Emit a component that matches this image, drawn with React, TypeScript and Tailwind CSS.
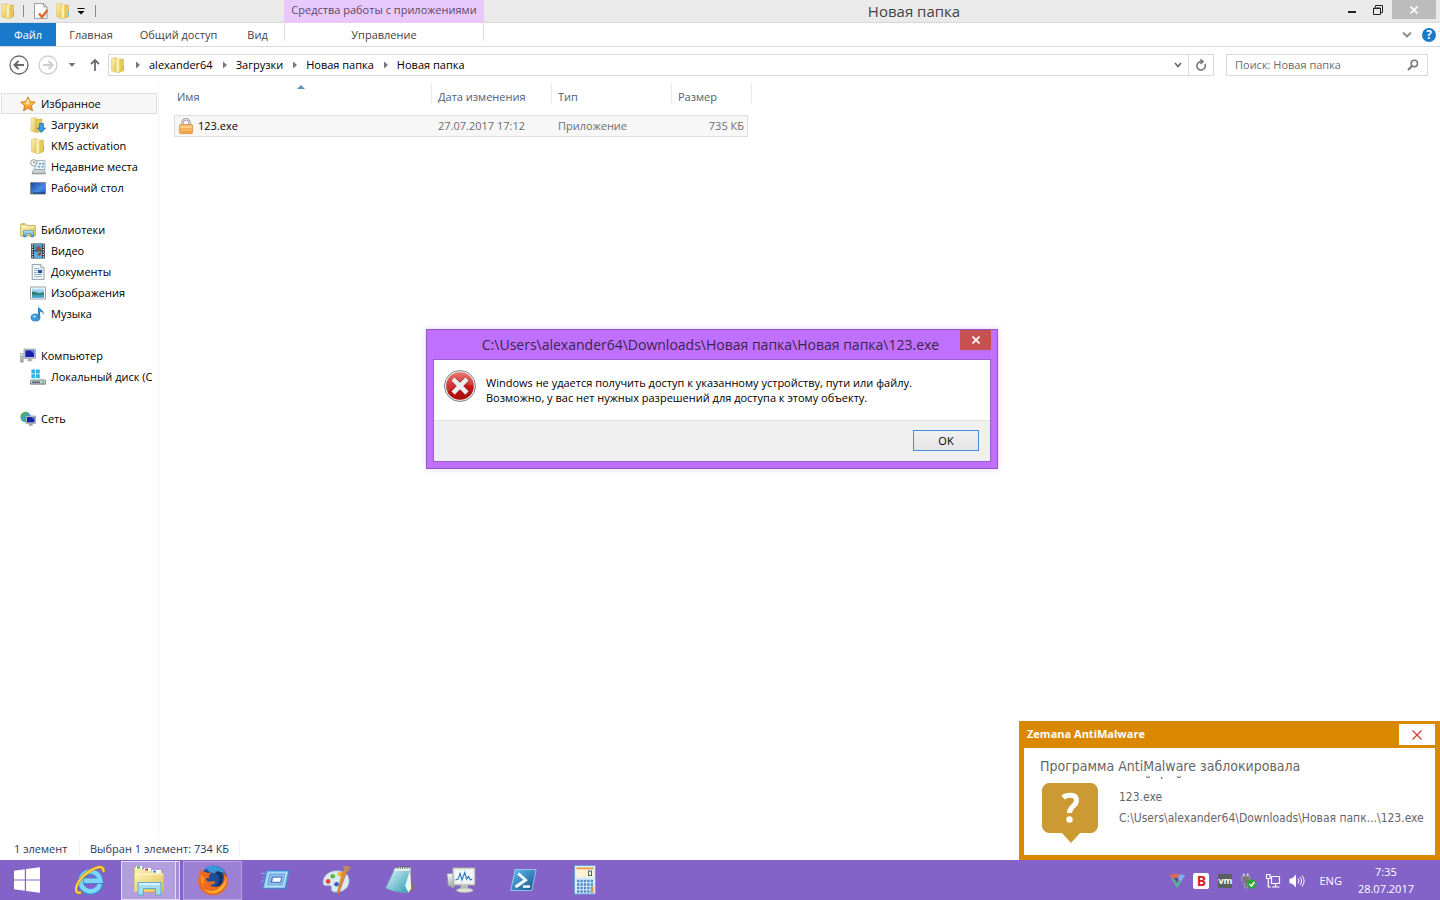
import { useState } from "react";
import type { ReactNode } from "react";

type IconProps = { className?: string };

type TreeItem = {
    label: string;
    icon: ReactNode;
};

type TreeGroup = TreeItem & {
    items: TreeItem[];
    selected?: boolean;
};

/* Gradients shared by all the icons below */
function Gradients() {
    return (
        <svg width="0" height="0" className="absolute" aria-hidden="true">
            <defs>
                <linearGradient id="folder" x1="0" y1="0" x2="1" y2="1">
                    <stop offset="0" stopColor="#fdf3b8" />
                    <stop offset="1" stopColor="#e0be4c" />
                </linearGradient>
                <linearGradient id="screen" x1="0" y1="0" x2="1" y2="1">
                    <stop offset="0" stopColor="#1a3f9e" />
                    <stop offset="0.6" stopColor="#4b8be4" />
                    <stop offset="1" stopColor="#1d4fb0" />
                </linearGradient>
                <linearGradient id="sky" x1="0" y1="0" x2="0" y2="1">
                    <stop offset="0" stopColor="#bfe6fb" />
                    <stop offset="1" stopColor="#2f8fd0" />
                </linearGradient>
                <linearGradient id="gold" x1="0" y1="0" x2="0" y2="1">
                    <stop offset="0" stopColor="#ffe27a" />
                    <stop offset="1" stopColor="#ef8a17" />
                </linearGradient>
                <linearGradient id="red" x1="0" y1="0" x2="0" y2="1">
                    <stop offset="0" stopColor="#e8605a" />
                    <stop offset="0.5" stopColor="#c81414" />
                    <stop offset="1" stopColor="#a80c0c" />
                </linearGradient>
                <linearGradient id="steel" x1="0" y1="0" x2="0" y2="1">
                    <stop offset="0" stopColor="#f5f7f8" />
                    <stop offset="1" stopColor="#9aa4ab" />
                </linearGradient>
                <linearGradient id="teal" x1="0" y1="0" x2="1" y2="1">
                    <stop offset="0" stopColor="#e4f7fb" />
                    <stop offset="1" stopColor="#2a9cb4" />
                </linearGradient>
                <linearGradient id="shell" x1="0" y1="0" x2="1" y2="1">
                    <stop offset="0" stopColor="#5fc0ee" />
                    <stop offset="1" stopColor="#114f91" />
                </linearGradient>
            </defs>
        </svg>
    );
}

function FolderIcon({ className }: IconProps) {
    return (
        <svg viewBox="0 0 16 16" className={className}>
            <path d="M1.500 1.200 7 .6v14.800l-5.500-1.600z" fill="url(#folder)" stroke="#d9bb55" strokeWidth=".5" />
            <path d="M7 2.200 13.400 2v11.800L8.500 15.400 7 15.200z" fill="#e6c95c" stroke="#c9a63f" strokeWidth=".5" />
            <path d="M6.400 2.600 9.200 1v13.400l-2.800 1z" fill="#fbf0b0" />
            <path d="M13 8.400h1v4.200l-1 .4z" fill="#6fb6d8" />
        </svg>
    );
}

function DownloadsIcon({ className }: IconProps) {
    return (
        <svg viewBox="0 0 16 16" className={className}>
            <path d="M1 1.200 6 .6v14.800l-5-1.600z" fill="url(#folder)" stroke="#d9bb55" strokeWidth=".5" />
            <path d="M6 2.200 12 2v11.800L7.500 15.400 6 15.200z" fill="#e6c95c" stroke="#c9a63f" strokeWidth=".5" />
            <path d="M9.400 6.500h4V11h2.200l-4.200 4.600L7.200 11h2.200z" fill="#3f9be0" stroke="#1b62a8" strokeWidth=".7" />
        </svg>
    );
}

function StarIcon({ className }: IconProps) {
    return (
        <svg viewBox="0 0 16 16" className={className}>
            <path
                d="M8 .8l2.100 4.800 5.200.5-3.900 3.500 1.100 5.200L8 12.100l-4.500 2.700 1.100-5.200L.7 6.100l5.200-.5z"
                fill="url(#gold)"
                stroke="#d0761c"
                strokeWidth=".9"
                strokeLinejoin="round"
            />
            <path d="M8 2.600 9.400 6 8 9 4.600 7l2-.4z" fill="#fff3b5" opacity=".8" />
        </svg>
    );
}

function RecentIcon({ className }: IconProps) {
    return (
        <svg viewBox="0 0 16 16" className={className}>
            <path d="M6 1.500h9v9H4.500z" fill="#e6f1f8" stroke="#93a3ad" strokeWidth=".8" />
            <path d="M9 4h2v1.500H9zM12 4h2v1.500h-2zM8 7h2v1.500H8zM11.500 7h2v1.500h-2z" fill="#5aa0cc" />
            <path d="M3 11h11.500l1 4H2z" fill="url(#steel)" stroke="#7f8b92" strokeWidth=".6" />
            <circle cx="3.800" cy="3.800" r="3.200" fill="#f4f7f9" stroke="#8a979f" strokeWidth=".9" />
            <path d="M3.800 1.800v2.200h1.600" fill="none" stroke="#5b6870" strokeWidth=".7" />
        </svg>
    );
}

function DesktopIcon({ className }: IconProps) {
    return (
        <svg viewBox="0 0 16 16" className={className}>
            <path d="M.5 2.500h15v11.500H.5z" fill="url(#screen)" stroke="#7a8798" strokeWidth=".9" />
            <path d="M1 12.500h14v1.200H1z" fill="#173a77" />
            <path d="M1.400 12.600h1.500v.9H1.400z" fill="#7fd36a" />
        </svg>
    );
}

function LibraryIcon({ className }: IconProps) {
    return (
        <svg viewBox="0 0 16 16" className={className}>
            <path d="M.7 2h5l1 1.400h8.600V14H.7z" fill="url(#folder)" stroke="#c3a046" strokeWidth=".8" />
            <path d="M2 1.500h2.600v1H2z" fill="#58b44d" />
            <path d="M1.500 5h13" stroke="#fff8d0" strokeWidth=".9" />
            <path d="M3.500 15V8.500h10V15h-2.600v-3.200H6.100V15z" fill="url(#sky)" stroke="#3d8cba" strokeWidth=".6" />
        </svg>
    );
}

function VideoIcon({ className }: IconProps) {
    return (
        <svg viewBox="0 0 16 16" className={className}>
            <path d="M1.200.5h13.600v15H1.200z" fill="#2b343b" />
            <path d="M4 1h8v6.500H4z" fill="#4c9ccc" />
            <path d="M4 8.400h8V15H4z" fill="#58aee0" />
            <path d="M5.500 3.500l1.500 1 2-1.500 2 2v2.500H6zM7 11.500l1.500-1.500L11 9v2.500L9 13z" fill="#865348" />
            <path d="M2.600 1.200v14M13.400 1.200v14" stroke="#eef3f5" strokeWidth="1.200" strokeDasharray="1.200 1.200" />
        </svg>
    );
}

function DocumentIcon({ className }: IconProps) {
    return (
        <svg viewBox="0 0 16 16" className={className}>
            <path d="M2.200.6h8.600l3.200 3.200v11.600H2.200z" fill="#fbfdfe" stroke="#84929c" strokeWidth=".9" />
            <path d="M10.800.6v3.200H14" fill="#d9e4ea" stroke="#84929c" strokeWidth=".7" />
            <path d="M4 4.500h5M4 6.500h3M4 8.500h3M4 10.500h8M4 12.700h8" stroke="#7ea4c4" strokeWidth=".9" />
            <path d="M7.800 5.800h4.400v3.400H7.800z" fill="#23599c" />
        </svg>
    );
}

function PictureIcon({ className }: IconProps) {
    return (
        <svg viewBox="0 0 16 16" className={className}>
            <path d="M.5 2h15v12H.5z" fill="#fdfdfd" stroke="#8d979e" strokeWidth=".9" />
            <path d="M2 3.500h12v9H2z" fill="url(#sky)" />
            <path d="M2 7c3-.6 4 .8 6.500 1.200S12 6.800 14 7.600V10H2z" fill="#2d7a58" />
            <path d="M2 9.600h12v2.900H2z" fill="#3f9ec4" />
        </svg>
    );
}

function MusicIcon({ className }: IconProps) {
    return (
        <svg viewBox="0 0 16 16" className={className}>
            <ellipse cx="5.500" cy="11.500" rx="4.500" ry="3.600" fill="#3d98dc" stroke="#20629c" strokeWidth=".6" />
            <path d="M8 12V.2c1 2.800 6.600 3.400 5.800 9.200-.4-2.400-1.900-3.400-3.700-3.900V12z" fill="#2b83c8" />
            <ellipse cx="4.400" cy="10.500" rx="1.800" ry="1.100" fill="#aedcf8" />
        </svg>
    );
}

function ComputerIcon({ className }: IconProps) {
    return (
        <svg viewBox="0 0 16 16" className={className}>
            <path d="M4 1h11.500v9.400H4z" fill="#cfd4d8" stroke="#868f96" strokeWidth=".7" />
            <path d="M5.300 2.300h8.900v6.800H5.300z" fill="#1822a8" />
            <path d="M10 2.300h4.200v3.400z" fill="#5b74ea" />
            <path d="M8.400 10.400h2.800l1.400 2.800H7z" fill="#aab1b6" />
            <path d="M.6 5.500h2.600v8.600H.6z" fill="url(#steel)" stroke="#7d878d" strokeWidth=".6" />
            <path d="M1.200 8h1.400v1.200H1.200z" fill="#66bb55" />
        </svg>
    );
}

function DiskIcon({ className }: IconProps) {
    return (
        <svg viewBox="0 0 16 16" className={className}>
            <path d="M1.400.6h3.800v3.800H1.400zM6 .6h3.800v3.800H6zM1.400 5.200h3.800V9H1.400zM6 5.200h3.800V9H6z" fill="#2bb4ea" />
            <path d="M2 9.500h12l1.500 2H.5z" fill="#d5dbdf" />
            <path d="M.5 11.300h15v3.900H.5z" fill="url(#steel)" stroke="#5f6a70" strokeWidth=".7" />
            <path d="M2 12.400h8v1.600H2z" fill="#5a6a72" />
            <path d="M12 12.400h2.200V14H12z" fill="#68d052" />
        </svg>
    );
}

function NetworkIcon({ className }: IconProps) {
    return (
        <svg viewBox="0 0 16 16" className={className}>
            <circle cx="5.600" cy="6" r="5.200" fill="#3f9fdc" />
            <path d="M2 3c2-2 4-2.400 5.400-1.600C7 4 4 4 3.600 6.600 2 7 .8 6 .6 5.400zM4 8l3 .6-.6 2.400C4.600 11 4 9.500 4 8z" fill="#4fb450" />
            <path d="M6 5h9.500v7.400H6z" fill="#c9d0d6" stroke="#7d868c" strokeWidth=".6" />
            <path d="M7 6h7.500v5.400H7z" fill="#1822a8" />
            <path d="M11 6h3.500v3z" fill="#5b74ea" />
            <path d="M9.600 12.400h2.400l1.200 2.400H8.400z" fill="#9aa2a8" />
        </svg>
    );
}

function LockIcon({ className }: IconProps) {
    return (
        <svg viewBox="0 0 16 16" className={className}>
            <path d="M4.500 8V4.500a3.500 3.300 0 0 1 7 0V8" fill="none" stroke="#9b9b9b" strokeWidth="2.400" />
            <path d="M4.500 8V4.500a3.500 3.300 0 0 1 7 0V8" fill="none" stroke="#e2e2e2" strokeWidth="1" />
            <rect x="1.500" y="6.500" width="13" height="9" rx="1" fill="#f3a74a" stroke="#cf7e22" strokeWidth=".6" />
            <path d="M2 7.200h12v3H2z" fill="#fbc77f" />
            <path d="M2.500 9.500h11M2.500 12h11" stroke="#ffd9a0" strokeWidth=".7" />
        </svg>
    );
}

function PropertiesIcon({ className }: IconProps) {
    return (
        <svg viewBox="0 0 16 16" className={className}>
            <path d="M1.500.6h9L14 4v11.400H1.500z" fill="#fff" stroke="#8f8f8f" strokeWidth=".9" />
            <path d="M10.500.6V4H14" fill="none" stroke="#8f8f8f" strokeWidth=".8" />
            <path d="M6 10.500 9 14l5.500-7" fill="none" stroke="#e0683c" strokeWidth="2.400" />
        </svg>
    );
}

function ErrorIcon({ className }: IconProps) {
    return (
        <svg viewBox="0 0 32 32" className={className}>
            <circle cx="16" cy="16" r="15.500" fill="#e9e9e9" stroke="#7b7b7b" strokeWidth=".9" />
            <circle cx="16" cy="16" r="13.800" fill="url(#red)" />
            <path d="M16 2.200A13.800 13.800 0 0 1 29.800 16C22 13 10 15 3.600 22A13.800 13.800 0 0 1 16 2.200z" fill="#fff" opacity=".14" />
            <path d="M9 9l14 14M23 9 9 23" stroke="#8b0d0d" strokeWidth="5.800" />
            <path d="M9 9l14 14M23 9 9 23" stroke="#ececec" strokeWidth="4.600" />
        </svg>
    );
}

function WindowsLogo({ className }: IconProps) {
    return (
        <svg viewBox="0 0 26 26" className={className}>
            <path d="M0 3.800 10.800 2.300v10.200H0zM12 2.100 26 .2v12.300H12zM0 13.600h10.800v10.200L0 22.300zM12 13.600h14v12.200l-14-1.900z" fill="#fff" />
        </svg>
    );
}

function ExplorerLogo({ className }: IconProps) {
    return (
        <svg viewBox="0 0 32 32" className={className}>
            <path d="M1 3h7l1 2h9l1 2h10l1 21H2z" fill="url(#folder)" stroke="#b99b4a" strokeWidth=".7" />
            <path d="M3 2h6v3H3z" fill="#fff" />
            <path d="M4 2.400h3v2H4z" fill="#2ea84a" />
            <path d="M11 4h7v3h-7z" fill="#fff" />
            <path d="M12 4.600h3v2h-3z" fill="#c2472f" />
            <path d="M19 6h9v3h-9z" fill="#fff" />
            <path d="M20 6.600h3v2h-3z" fill="#3b8ed0" />
            <path d="M1.500 9.500h29V28h-29z" fill="url(#folder)" />
            <path d="M2 10h28" stroke="#fff8d6" />
            <path d="M5 31V18.500h23V31h-5.500v-6.500h-12V31z" fill="#a6dcf2" stroke="#4fa6cc" strokeWidth=".9" />
            <path d="M6 20h21" stroke="#effaff" strokeWidth="1.500" />
        </svg>
    );
}

function InternetExplorerLogo({ className }: IconProps) {
    return (
        <svg viewBox="0 0 32 32" className={className}>
            <path d="M26.800 20.500A10.500 10.500 0 1 1 27 16.800H9.500" fill="none" stroke="#2e8fd4" strokeWidth="6.400" />
            <path d="M26.600 20.500A10.500 10.500 0 1 1 27 16.800H9.500" fill="none" stroke="#7fd6fa" strokeWidth="4.800" />
            <path
                d="M5.500 29.500C-2 31 .5 19.500 10 11S30.500-1.500 30.500 6.500"
                fill="none"
                stroke="#b98212"
                strokeWidth="3.400"
                strokeLinecap="round"
            />
            <path
                d="M5.500 29.500C-2 31 .5 19.500 10 11S30.500-1.500 30.500 6.500"
                fill="none"
                stroke="#fbd548"
                strokeWidth="2.200"
                strokeLinecap="round"
            />
        </svg>
    );
}

function FirefoxLogo({ className }: IconProps) {
    return (
        <svg viewBox="0 0 32 32" className={className}>
            <circle cx="17" cy="14.500" r="12.800" fill="#1d4f96" />
            <path d="M9 3.500C15-.5 25 2 28 9c-5-2-8 1-12 0S9 5 9 3.500z" fill="#3d96d8" />
            <path d="M18 8c4-2 8 1 8 6s-3 9-8 9c5-4 6-10 0-15z" fill="#143468" />
            <path
                d="M3.500 5C3 7 3 8.500 3.300 9.500 1 13-.5 20 4 25.500c6 7.500 17 7.500 22.500 1.500 4.500-4.500 6-11 3.500-17 .2 2-.3 3-.8 3.600-.4-2.500-1.500-4.500-3-5.600 1.300 5 1 9.500-2 12.500-4 4-10 2.500-11.500 0 2.500.8 4-.5 5.800-1.700-.8-2-3-1.700-5-1.200-2.500.6-4.500-.8-4.700-3 .8-.7 2-.7 3.200-.2.2-1.200 0-1.900-.3-2.400.8-1.400 2-2.300 3.200-3-1.400-.2-3-.3-4.300 0C9.500 8.200 6.500 7.600 5.200 7.800 4.400 7.300 3.800 6.200 3.500 5z"
                fill="#ee6a1c"
            />
            <path d="M29.500 12c1 6-2 13-8 16-6 2.500-12 1-15-3 5 3 11 3 16-1s6-8 7-12z" fill="#f9b62c" />
            <path d="M4 10c-1 4 0 9 3 12-1-4 0-7 1-8.500-2-.5-3.500-2-4-3.500z" fill="#f8922a" />
        </svg>
    );
}

function RunIcon({ className }: IconProps) {
    return (
        <svg viewBox="0 0 32 32" className={className}>
            <path d="M1 9h8M3 13h8M1 17h6M5 21h4" stroke="#8fc0f0" strokeWidth="1.200" opacity=".7" />
            <path d="M7 6h24l-4 19H3z" fill="#8cc6f2" stroke="#4286cf" strokeWidth="1.200" />
            <path d="M9.500 8.500h18.500L25 22.500H6.500z" fill="#6ba4dd" stroke="#c9e8fb" strokeWidth="1.200" />
            <path d="M12 11.500h13l-2 8.500H10z" fill="#4f7fd0" stroke="#b4dcf8" />
            <path d="M14 13.500h8.500l-1 4.300H13z" fill="#fff" />
        </svg>
    );
}

function PaintIcon({ className }: IconProps) {
    return (
        <svg viewBox="0 0 32 32" className={className}>
            <path
                d="M16 6C7 6 1 12 1 18.500c0 4 3 4 5.500 3.500s4 .5 3.500 3c-.5 3 2 4 5 4 8 0 14-5 14-12S24 6 16 6z"
                fill="#dceaf5"
                stroke="#8fa9c4"
                strokeWidth=".8"
            />
            <circle cx="6.500" cy="17.500" r="2.500" fill="#e2472f" />
            <circle cx="11.500" cy="12" r="2.500" fill="#5cb63f" />
            <circle cx="19" cy="9.800" r="2.500" fill="#f2bc2b" />
            <circle cx="15.500" cy="20.500" r="2.500" fill="#3c62bd" />
            <path d="M26.500 7 17.500 31.500l-1.500-1L22 7z" fill="#e88c30" stroke="#a85d18" strokeWidth=".5" />
            <path d="M22 7.500 24 4l-2-3.500 9 1.500-3 4.500-2 2z" fill="#c48a5c" />
        </svg>
    );
}

function NotepadIcon({ className }: IconProps) {
    return (
        <svg viewBox="0 0 32 32" className={className}>
            <path d="M28 4 31.500 26l-5.500 4z" fill="#8d7452" />
            <path d="M12 3h16l-3.500 26.500C16 29 8 28 2 24.500z" fill="url(#teal)" stroke="#7fa9b2" strokeWidth=".6" />
            <path d="M28 5 22.500 22l3.500 7.500 3-4.500z" fill="#eaf6f6" />
            <path d="M12 2.500h16.500L28 6H10.500z" fill="#f4f5f5" />
            <path d="M12 2.500h17" stroke="#5d6568" strokeWidth="3" strokeDasharray="1.200 1.200" />
        </svg>
    );
}

function MonitorIcon({ className }: IconProps) {
    return (
        <svg viewBox="0 0 32 32" className={className}>
            <path d="M1 9h8v16l-7-3z" fill="url(#steel)" stroke="#7e868b" strokeWidth=".7" />
            <path d="M7 3h24v18.500H8z" fill="#e9e9e4" stroke="#8b8b86" strokeWidth=".8" />
            <path d="M9.500 5.500h19V19H10z" fill="#f2f9fc" />
            <path d="M10 16l3-1 2-6 2 7 3-8 2 7 2-3 2 4 2-1" fill="none" stroke="#2b77bd" strokeWidth="1.200" />
            <path d="M16 21.500h7l1 4h-9z" fill="#c6c8c6" />
            <ellipse cx="20" cy="27" rx="9" ry="2.600" fill="#dedfdc" stroke="#8b8b86" strokeWidth=".6" />
        </svg>
    );
}

function PowerShellIcon({ className }: IconProps) {
    return (
        <svg viewBox="0 0 32 32" className={className}>
            <path d="M7 4h24l-5 24H2z" fill="url(#shell)" stroke="#9fd0ea" strokeWidth="1" />
            <path d="M10.500 8.500 19 16 7.500 24" fill="none" stroke="#fff" strokeWidth="3.200" />
            <path d="M16 23.500h8" stroke="#fff" strokeWidth="2.800" />
        </svg>
    );
}

function CalculatorIcon({ className }: IconProps) {
    return (
        <svg viewBox="0 0 32 32" className={className}>
            <rect x="5.500" y="1.500" width="21" height="28.500" rx="1" fill="#dceefb" stroke="#6f9fd4" />
            <path d="M7.500 3.500h17v2h-17z" fill="#ef9b3a" />
            <path d="M7.500 5.500h17V13h-17z" fill="#fff3d6" />
            <rect x="19.500" y="7" width="3" height="4.500" fill="none" stroke="#4a5d78" />
            <path
                d="M8 17h16M8 20.500h16M8 24h16M8 27.500h16"
                stroke="#4d8cc9"
                strokeWidth="2.400"
                strokeDasharray="2.400 1"
            />
            <path d="M22 22.500h2.500v6H22z" fill="#e9962f" />
        </svg>
    );
}

function TrayIcons() {
    return (
        <>
            <svg viewBox="0 0 16 16" className="size-4">
                <path d="M0 2 5 .8l6 .4L8 5H3.500z" fill="#e06a58" />
                <path d="M10.500 1.200 16 2l-4 7-3-3.500z" fill="#7fb2ea" />
                <path d="M1.500 4.500 4.500 5l3.300 5.500 3-4 1.200 2-4 6.500z" fill="#52b98a" />
                <path d="M4.800 5h4.400l-1.400 4z" fill="#5a4590" />
            </svg>
            <span className="flex size-4 items-center justify-center rounded-xs bg-white text-sm leading-4 font-bold text-[#d61f26]">
                B
            </span>
            <span className="mx-px flex h-[14px] w-[14px] items-center justify-center bg-[#5e5e5e] text-[9px] leading-3 font-bold text-white">
                vm
            </span>
            <svg viewBox="0 0 16 16" className="size-4">
                <path d="M2 .5h1.500V3H2zM6 .5h1.500V3H6z" fill="#ddd" />
                <path d="M.8 3h8v5l-2.500 2v5H3.500v-5L.8 8z" fill="#777" stroke="#b5b5b5" strokeWidth=".6" />
                <circle cx="11" cy="11" r="4.800" fill="#2fa43a" />
                <path d="M8.600 11l1.900 2 3-4" fill="none" stroke="#fff" strokeWidth="1.500" />
            </svg>
            <svg viewBox="0 0 16 16" className="size-4" fill="none" stroke="#fff" strokeWidth="1.200">
                <path d="M6.500 3.500h8v7h-8zM10.500 10.500v3M7 14h7.500" />
                <path d="M1.500 1.500h3.500v4H1.500zM3.300 5.500V14h2.500" />
            </svg>
            <svg viewBox="0 0 16 16" className="size-4">
                <path d="M.5 5.500H3l4-4v13l-4-4H.5z" fill="#fff" />
                <path d="M9 5.500a4 4 0 0 1 0 5M11 4a6 6 0 0 1 0 8M13 2.500a9 9 0 0 1 0 11" fill="none" stroke="#fff" strokeWidth="1" />
            </svg>
        </>
    );
}

const tree: TreeGroup[] = [
    {
        label: "Избранное",
        icon: <StarIcon className="size-4 shrink-0" />,
        selected: true,
        items: [
            { label: "Загрузки", icon: <DownloadsIcon className="size-4 shrink-0" /> },
            { label: "KMS activation", icon: <FolderIcon className="size-4 shrink-0" /> },
            { label: "Недавние места", icon: <RecentIcon className="size-4 shrink-0" /> },
            { label: "Рабочий стол", icon: <DesktopIcon className="size-4 shrink-0" /> },
        ],
    },
    {
        label: "Библиотеки",
        icon: <LibraryIcon className="size-4 shrink-0" />,
        items: [
            { label: "Видео", icon: <VideoIcon className="size-4 shrink-0" /> },
            { label: "Документы", icon: <DocumentIcon className="size-4 shrink-0" /> },
            { label: "Изображения", icon: <PictureIcon className="size-4 shrink-0" /> },
            { label: "Музыка", icon: <MusicIcon className="size-4 shrink-0" /> },
        ],
    },
    {
        label: "Компьютер",
        icon: <ComputerIcon className="size-4 shrink-0" />,
        items: [{ label: "Локальный диск (C", icon: <DiskIcon className="size-4 shrink-0" /> }],
    },
    { label: "Сеть", icon: <NetworkIcon className="size-4 shrink-0" />, items: [] },
];

const crumbs = ["alexander64", "Загрузки", "Новая папка", "Новая папка"];

const pinned = [
    { label: "Выполнить", icon: <RunIcon className="size-[30px]" /> },
    { label: "Paint", icon: <PaintIcon className="size-[30px]" /> },
    { label: "Блокнот", icon: <NotepadIcon className="size-[30px]" /> },
    { label: "Монитор ресурсов", icon: <MonitorIcon className="size-[30px]" /> },
    { label: "PowerShell", icon: <PowerShellIcon className="size-7" /> },
    { label: "Калькулятор", icon: <CalculatorIcon className="size-8" /> },
];

function TitleBar() {
    return (
        <header className="flex h-[23px] shrink-0 bg-[#eaeaea]">
            <div className="flex w-[284px] items-center border-b border-[#d8d8d8]">
                <FolderIcon className="size-4" />
                <span className="ml-[7px] h-3 w-px bg-[#8a8a8a]" />
                <button aria-label="Свойства" className="ml-[9px]">
                    <PropertiesIcon className="size-4" />
                </button>
                <button aria-label="Новая папка" className="ml-[6px]">
                    <FolderIcon className="size-4" />
                </button>
                <button aria-label="Настройка панели" className="ml-[6px]">
                    <svg viewBox="0 0 8 8" className="size-2">
                        <path d="M.5 1.500h7" stroke="#000" />
                        <path d="M.5 4h7L4 7.500z" fill="#000" />
                    </svg>
                </button>
                <span className="ml-[10px] h-3 w-px bg-[#8a8a8a]" />
            </div>
            <div className="flex w-[200px] justify-center bg-[#e9c9fb] text-[11px] leading-5 whitespace-nowrap text-[#5b4a68]">
                Средства работы с приложениями
            </div>
            <h1 className="flex-1 border-b border-[#d8d8d8] text-center text-[15px] leading-[22px] text-[#444]">Новая папка</h1>
            <div className="flex items-start border-b border-[#d8d8d8]">
                <button aria-label="Свернуть" className="flex h-5 w-4 items-center justify-center">
                    <svg viewBox="0 0 8 8" className="size-2">
                        <path d="M0 6h8" stroke="#222" strokeWidth="2" />
                    </svg>
                </button>
                <button aria-label="Восстановить" className="flex h-5 w-8 items-center justify-center pl-1">
                    <svg viewBox="0 0 10 10" className="size-[10px]" fill="none" stroke="#222">
                        <path d="M.5 3h7v6.500h-7zM0 3.500h8M2.500 2.500V.5h7v7H8" />
                    </svg>
                </button>
                <button aria-label="Закрыть" className="flex h-[19px] w-11 items-center justify-center bg-[#bcbcbc]">
                    <svg viewBox="0 0 8 8" className="size-2" stroke="#fff" strokeWidth="1.600">
                        <path d="M.5.5l7 7M7.500.5l-7 7" />
                    </svg>
                </button>
                <span className="w-1" />
            </div>
        </header>
    );
}

function Ribbon() {
    return (
        <nav className="flex h-6 shrink-0 border-b border-[#dadbdc] text-[11px] leading-6 text-[#444]">
            <button className="w-14 bg-[#1979ca] text-white">Файл</button>
            <button className="w-[70px]">Главная</button>
            <button className="w-[105px]">Общий доступ</button>
            <button className="w-[53px]">Вид</button>
            <button className="h-[18px] w-[200px] border-x border-[#e4e0e6]">Управление</button>
            <div className="ml-auto flex items-center gap-[10px] pr-1">
                <button aria-label="Развернуть ленту">
                    <svg viewBox="0 0 10 8" className="h-2 w-[10px]" fill="none" stroke="#8a8a8a" strokeWidth="1.800">
                        <path d="M1 1.500l4 4 4-4" />
                    </svg>
                </button>
                <button
                    aria-label="Справка"
                    className="flex size-[14px] items-center justify-center rounded-full bg-[#1979ca] text-xs leading-[14px] font-bold text-white"
                >
                    ?
                </button>
            </div>
        </nav>
    );
}

function AddressRow() {
    return (
        <div className="flex h-9 shrink-0 items-center pr-3 text-[11px] text-black">
            <div className="flex w-[108px] items-center pl-[9px]">
                <button aria-label="Назад">
                    <svg viewBox="0 0 20 20" className="size-5" fill="none" stroke="#6b6b6b">
                        <circle cx="10" cy="10" r="9" strokeWidth="1.300" />
                        <path d="M15 10H6M9.500 6 5.500 10l4 4" strokeWidth="2" />
                    </svg>
                </button>
                <button aria-label="Вперед" className="ml-[9px]">
                    <svg viewBox="0 0 20 20" className="size-5" fill="none" stroke="#cdcdcd">
                        <circle cx="10" cy="10" r="9" strokeWidth="1.300" />
                        <path d="M5 10h9M10.500 6l4 4-4 4" strokeWidth="2" />
                    </svg>
                </button>
                <button aria-label="Последние расположения" className="ml-[10px]">
                    <svg viewBox="0 0 8 8" className="size-2">
                        <path d="M.5 2h7L4 6z" fill="#777" />
                    </svg>
                </button>
                <button aria-label="Вверх" className="ml-[13px]">
                    <svg viewBox="0 0 12 14" className="h-[14px] w-3" fill="none" stroke="#6b6b6b" strokeWidth="1.800">
                        <path d="M6 13V2M2 6l4-4 4 4" />
                    </svg>
                </button>
            </div>
            <div className="flex h-[22px] min-w-0 flex-1 items-center border border-[#d9d9d9]">
                <FolderIcon className="ml-px size-4" />
                {crumbs.map((crumb, i) => (
                    <span key={i} className="flex items-center">
                        <svg viewBox="0 0 8 8" className="mr-[7px] ml-2 size-2">
                            <path d="M2 .5 6 4 2 7.500z" fill="#777" />
                        </svg>
                        <button className="leading-5 whitespace-nowrap">{crumb}</button>
                    </span>
                ))}
                <button aria-label="Предыдущие расположения" className="ml-auto flex w-5 justify-center">
                    <svg viewBox="0 0 8 8" className="size-2" fill="none" stroke="#666" strokeWidth="1.600">
                        <path d="M1 2l3 3.500L7 2" />
                    </svg>
                </button>
                <button aria-label="Обновить" className="flex h-full w-[25px] items-center justify-center border-l border-[#d9d9d9]">
                    <svg viewBox="0 0 12 12" className="size-3" fill="none" stroke="#777" strokeWidth="1.600">
                        <path d="M9.800 4.800A4.200 4.200 0 1 1 6 2.600h1.500" />
                        <path d="M5.500.3 8 2.600 5.500 4.900" />
                    </svg>
                </button>
            </div>
            <label className="ml-3 flex h-[22px] w-[202px] items-center border border-[#d9d9d9] px-2">
                <input
                    type="search"
                    aria-label="Поиск"
                    placeholder="Поиск: Новая папка"
                    className="min-w-0 flex-1 leading-5 outline-none placeholder:text-[#6d6d6d]"
                />
                <svg viewBox="0 0 12 12" className="size-3 shrink-0" fill="none" stroke="#777">
                    <circle cx="7.300" cy="4.500" r="3.200" strokeWidth="1.500" />
                    <path d="M5 7 1 11" strokeWidth="2" />
                </svg>
            </label>
        </div>
    );
}

function Sidebar() {
    return (
        <aside className="w-[159px] shrink-0 overflow-hidden border-r border-[#f3f3f3] pt-[10px] text-[11px] leading-[21px] text-black">
            {tree.map((group) => (
                <div key={group.label} className="mb-[21px]">
                    <a
                        href="#"
                        className={`mx-px flex h-[21px] items-center gap-[5px] pl-[19px] ${
                            group.selected ? "bg-[#f7f7f7] outline -outline-offset-1 outline-[#dedede]" : ""
                        }`}
                    >
                        {group.icon}
                        {group.label}
                    </a>
                    {group.items.map((item) => (
                        <a key={item.label} href="#" className="flex h-[21px] items-center gap-[5px] pl-[30px] whitespace-nowrap">
                            {item.icon}
                            {item.label}
                        </a>
                    ))}
                </div>
            ))}
        </aside>
    );
}

function FileList() {
    const divider = "absolute top-0 right-0 h-5 w-px bg-[#e5eaf0]";

    return (
        <main className="min-w-0 flex-1 pl-[15px] text-[11px]">
            <table className="w-[574px] table-fixed border-collapse text-left">
                <thead>
                    <tr className="h-8 align-top leading-7 text-[#4c607a]">
                        <th className="relative w-[258px] pl-[3px] font-normal">
                            Имя
                            <svg viewBox="0 0 8 4" className="absolute top-0.5 left-[123px] h-1 w-2">
                                <path d="M0 4 4 0l4 4z" fill="#5f93b5" />
                            </svg>
                            <span className={divider} />
                        </th>
                        <th className="relative w-[120px] pl-[6px] font-normal">
                            Дата изменения
                            <span className={divider} />
                        </th>
                        <th className="relative w-[120px] pl-[6px] font-normal">
                            Тип
                            <span className={divider} />
                        </th>
                        <th className="relative pl-[6px] font-normal">
                            Размер
                            <span className="absolute top-0 -right-1 h-5 w-px bg-[#e5eaf0]" />
                        </th>
                    </tr>
                </thead>
                <tbody>
                    <tr className="h-[22px] bg-[#f7f7f7] leading-5 text-[#6d6d6d] outline -outline-offset-1 outline-[#dedede]">
                        <td className="pl-1 text-black">
                            <span className="flex items-center gap-1">
                                <LockIcon className="size-4" />
                                123.exe
                            </span>
                        </td>
                        <td className="pl-[6px]">27.07.2017 17:12</td>
                        <td className="pl-[6px]">Приложение</td>
                        <td className="pr-1 text-right">735 КБ</td>
                    </tr>
                </tbody>
            </table>
        </main>
    );
}

function ErrorDialog({ onClose }: { onClose: () => void }) {
    return (
        <div
            role="dialog"
            aria-labelledby="dialog-title"
            className="absolute top-[329px] left-[426px] flex w-[572px] flex-col border border-[#9255c4] bg-[#c070ff] px-[6px] pb-[6px] shadow-[0_0_6px_rgba(192,112,255,0.35)]"
        >
            <div className="flex h-[29px]">
                <h2 id="dialog-title" className="flex-1 pl-7 text-center text-sm leading-[30px] whitespace-nowrap text-[#3a2350]">
                    C:\Users\alexander64\Downloads\Новая папка\Новая папка\123.exe
                </h2>
                <button aria-label="Закрыть" onClick={onClose} className="flex h-5 w-[31px] items-center justify-center bg-[#c75050]">
                    <svg viewBox="0 0 8 8" className="size-2" stroke="#fff" strokeWidth="1.600">
                        <path d="M.5.5l7 7M7.500.5l-7 7" />
                    </svg>
                </button>
            </div>
            <div className="border border-[#9c5fd0] bg-white text-[11px] text-black">
                <div className="flex h-[60px] gap-[10px] pt-[10px] pl-[10px]">
                    <ErrorIcon className="size-8 shrink-0" />
                    <p className="pt-[5px] leading-[15px] whitespace-nowrap">
                        Windows не удается получить доступ к указанному устройству, пути или файлу.
                        <br />
                        Возможно, у вас нет нужных разрешений для доступа к этому объекту.
                    </p>
                </div>
                <div className="flex h-[41px] items-start justify-end border-t border-[#dfdfdf] bg-[#f0f0f0] pt-[9px] pr-[11px]">
                    <button
                        onClick={onClose}
                        className="h-[21px] w-[66px] border border-[#3d8fdd] bg-linear-to-b from-[#f0f0f0] to-[#e5e5e5] leading-[19px]"
                    >
                        OK
                    </button>
                </div>
            </div>
        </div>
    );
}

function AntiMalwareToast({ onClose }: { onClose: () => void }) {
    return (
        <section className="absolute right-0 bottom-10 w-[421px] bg-[#d98800] px-[5px] pb-[5px] text-[#666]">
            <div className="flex h-[27px] items-center justify-between pl-[3px]">
                <h2 className="text-[11px] font-bold text-white">Zemana AntiMalware</h2>
                <button aria-label="Закрыть" onClick={onClose} className="flex h-[21px] w-9 items-center justify-center bg-white">
                    <svg viewBox="0 0 10 10" className="size-[10px]" stroke="#d8392b" strokeWidth="1.200">
                        <path d="M.5.5l9 9M9.500.5l-9 9" />
                    </svg>
                </button>
            </div>
            <div className="h-[107px] bg-white pt-[10px] pl-4 font-['DejaVu_Sans_Condensed','Open_Sans',sans-serif]">
                <p className="h-[21px] overflow-hidden text-sm leading-4">
                    Программа AntiMalware заблокировала
                    <br />
                    подозрительный файл
                </p>
                <div className="flex gap-[19px] pt-1">
                    <svg viewBox="0 0 60 62" className="h-[62px] w-[60px] shrink-0">
                        <path
                            d="M11 0h38a8 8 0 0 1 9 9v32a8 8 0 0 1-9 9h-9l-9 10-9-10h-11a8 8 0 0 1-9-9V9a8 8 0 0 1 9-9z"
                            fill="#cc9a33"
                        />
                        <path
                            d="M23 14.500c3-2.500 13.500-4.500 13.500 3 0 6-7 5.500-7 12.500"
                            fill="none"
                            stroke="#fff"
                            strokeWidth="5"
                        />
                        <circle cx="29.500" cy="36.500" r="3.200" fill="#fff" />
                    </svg>
                    <div className="pt-1 text-xs leading-[21px] whitespace-nowrap">
                        <p>123.exe</p>
                        <p>C:\Users\alexander64\Downloads\Новая папк...\123.exe</p>
                    </div>
                </div>
            </div>
        </section>
    );
}

function Taskbar() {
    return (
        <footer className="flex h-10 shrink-0 items-center bg-[#8463c9] text-[11px] text-white">
            <button aria-label="Пуск" className="flex w-[58px] justify-center pr-1">
                <WindowsLogo className="size-[26px]" />
            </button>
            <button aria-label="Internet Explorer" className="flex w-[63px] justify-center">
                <InternetExplorerLogo className="size-[30px]" />
            </button>
            <div className="flex h-[39px] w-[60px]">
                <button aria-label="Проводник" className="flex w-[55px] items-center justify-center border border-[#e5daf6] bg-[#b39edf]">
                    <ExplorerLogo className="size-8" />
                </button>
                <span className="w-1 border-y border-r border-[#e5daf6] bg-[#a58dd9]" />
            </div>
            <button
                aria-label="Firefox"
                className="mr-[2px] ml-[2px] flex h-[39px] w-[59px] items-center justify-center border border-[#b8a4e2] bg-[#9b80d4]"
            >
                <FirefoxLogo className="size-8" />
            </button>
            {pinned.map((app) => (
                <button key={app.label} aria-label={app.label} className="flex w-[62px] justify-center">
                    {app.icon}
                </button>
            ))}
            <div className="ml-auto flex items-center gap-2 pt-0.5 pr-[26px]">
                <TrayIcons />
                <span className="ml-[6px]">ENG</span>
                <time className="ml-2 pb-0.5 text-center leading-[17px]">
                    7:35
                    <br />
                    28.07.2017
                </time>
            </div>
        </footer>
    );
}

export default function App() {
    const [dialogOpen, setDialogOpen] = useState(true);
    const [toastOpen, setToastOpen] = useState(true);

    return (
        <div className="relative flex h-screen w-full flex-col overflow-hidden bg-white font-['Open_Sans','Noto_Sans',sans-serif]">
            <Gradients />
            <TitleBar />
            <Ribbon />
            <AddressRow />
            <div className="flex min-h-0 flex-1">
                <Sidebar />
                <FileList />
            </div>
            <div className="flex h-[22px] shrink-0 items-center pl-[14px] text-[11px] text-[#1e395b]">
                <span className="w-[66px] border-r border-[#f0f0f0]">1 элемент</span>
                <span className="border-r border-[#f0f0f0] px-[10px]">Выбран 1 элемент: 734 КБ</span>
            </div>
            <Taskbar />
            {dialogOpen && <ErrorDialog onClose={() => setDialogOpen(false)} />}
            {toastOpen && <AntiMalwareToast onClose={() => setToastOpen(false)} />}
        </div>
    );
}
